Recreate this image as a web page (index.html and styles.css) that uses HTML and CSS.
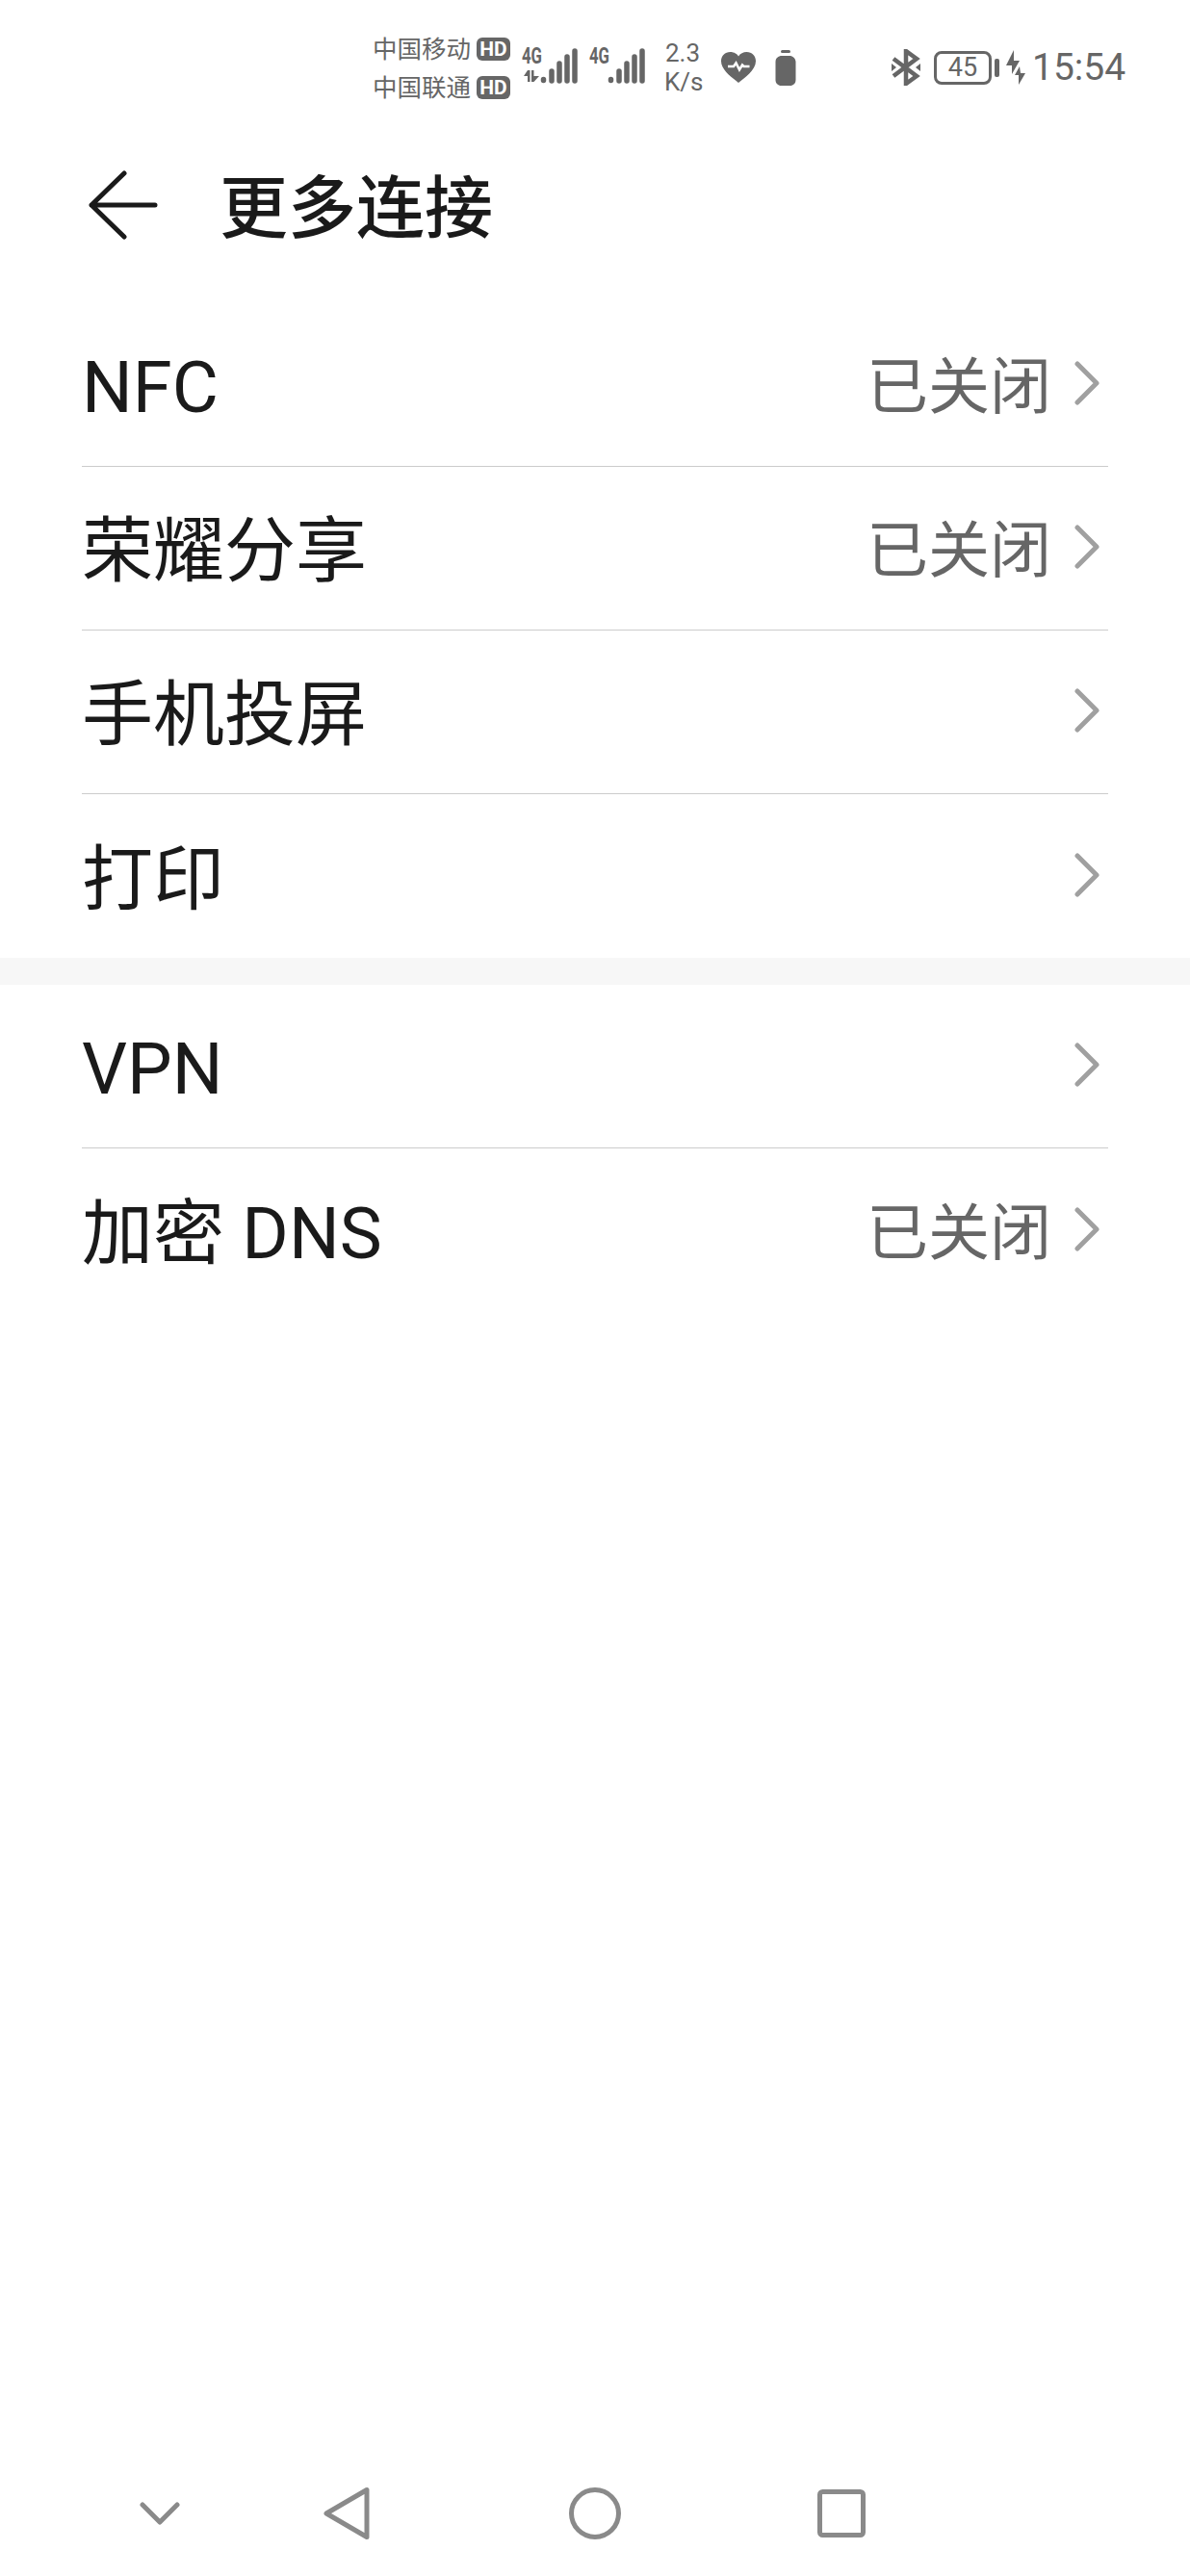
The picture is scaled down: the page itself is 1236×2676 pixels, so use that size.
FILE: index.html
```html
<!DOCTYPE html>
<html lang="zh-CN">
<head>
    <meta charset="UTF-8">
    <meta name="viewport" content="width=device-width, initial-scale=1.0">
    <title>更多连接</title>
    <link rel="stylesheet" href="styles.css">
</head>
<body>
    <div class="page">
        <div class="status-bar">
            <div class="carriers">
                <div class="carrier"><span>中国移动</span><span class="hd">HD</span></div>
                <div class="carrier"><span>中国联通</span><span class="hd">HD</span></div>
            </div>
            <svg class="signal" width="58" height="46" viewBox="0 -8 58 46">
                <text class="net" x="0" y="16" textLength="21" lengthAdjust="spacingAndGlyphs">4G</text>
                <path class="arrows" d="M6 23h2.500v12H6v-6H2zM10 23h2.500v6H18l-5.500 6H10z"/>
                <path class="bars" d="M22.500 32.500v1M31 24v10M39 16v18M47 9v25M55 3v31"/>
            </svg>
            <svg class="signal" width="58" height="46" viewBox="0 -8 58 46">
                <text class="net" x="0" y="16" textLength="21" lengthAdjust="spacingAndGlyphs">4G</text>
                <path class="bars" d="M22.500 32.500v1M31 24v10M39 16v18M47 9v25M55 3v31"/>
            </svg>
            <div class="speed"><span>2.3</span><span>K/s</span></div>
            <svg class="heart" width="36" height="32" viewBox="0 0 36 32">
                <path d="M18 32C12 27 0 19 0 9.500 0 4 4 0 9.500 0c3.500 0 6.700 1.600 8.500 4.500C19.800 1.600 23 0 26.500 0 32 0 36 4 36 9.500 36 19 24 27 18 32z"/>
                <path class="pulse" d="M7 15h6l2.500-3.500 3.500 7 3-5 1.500 1.500h6"/>
            </svg>
            <svg class="pill" width="22" height="37" viewBox="0 0 22 37">
                <rect x="6" y="0" width="10" height="3" rx="1.500"/>
                <path d="M7 6h8c3.500 0 6 2.500 6.500 6v19c0 3.500-2.500 6-6 6h-9c-3.500 0-6-2.500-6-6V12C.5 8.500 3.500 6 7 6z"/>
            </svg>
            <svg class="bluetooth" width="30" height="38" viewBox="0 0 30 38">
                <path class="bt-line" d="M2 10l24 18-11 8V2l11 8L2 28"/>
                <path d="M0 15l5 4-5 4zM30 15l-5 4 5 4z"/>
            </svg>
            <div class="battery"><span class="battery-level">45</span></div>
            <div class="battery-nub"></div>
            <svg class="bolt" width="20" height="36" viewBox="0 0 20 36">
                <path d="M8 0L0 16h6v9l8-14H8zM14 17l-5 9h4v10l7-12h-5z"/>
            </svg>
            <div class="clock">15:54</div>
        </div>

        <div class="toolbar">
            <svg class="back" width="72" height="72" viewBox="0 0 72 72">
                <path d="M37 3L3 36l34 33M3 36h66"/>
            </svg>
            <h1 class="title">更多连接</h1>
        </div>

        <div class="list list-first">
            <div class="row">
                <span class="label">NFC</span>
                <span class="value">已关闭</span>
                <svg class="chevron" width="26" height="46" viewBox="0 0 26 46"><path d="M3 3l20 20L3 43"/></svg>
            </div>
            <div class="row">
                <span class="label">荣耀分享</span>
                <span class="value">已关闭</span>
                <svg class="chevron" width="26" height="46" viewBox="0 0 26 46"><path d="M3 3l20 20L3 43"/></svg>
            </div>
            <div class="row">
                <span class="label">手机投屏</span>
                <svg class="chevron" width="26" height="46" viewBox="0 0 26 46"><path d="M3 3l20 20L3 43"/></svg>
            </div>
            <div class="row">
                <span class="label">打印</span>
                <svg class="chevron" width="26" height="46" viewBox="0 0 26 46"><path d="M3 3l20 20L3 43"/></svg>
            </div>
        </div>

        <div class="band"></div>

        <div class="list">
            <div class="row">
                <span class="label">VPN</span>
                <svg class="chevron" width="26" height="46" viewBox="0 0 26 46"><path d="M3 3l20 20L3 43"/></svg>
            </div>
            <div class="row">
                <span class="label">加密 DNS</span>
                <span class="value">已关闭</span>
                <svg class="chevron" width="26" height="46" viewBox="0 0 26 46"><path d="M3 3l20 20L3 43"/></svg>
            </div>
        </div>

        <div class="nav-bar">
            <svg class="nav-down" width="42" height="24" viewBox="0 0 42 24"><path d="M3 3l18 18L39 3"/></svg>
            <svg class="nav-back" width="48" height="56" viewBox="0 0 48 56"><path d="M45 3.500v49L3 28z"/></svg>
            <svg class="nav-home" width="54" height="54" viewBox="0 0 54 54"><circle cx="27" cy="27" r="24.500"/></svg>
            <svg class="nav-recent" width="50" height="50" viewBox="0 0 50 50"><rect x="2.500" y="2.500" width="45" height="45" rx="3"/></svg>
        </div>
    </div>
</body>
</html>
```

FILE: styles.css
```css
body {
    margin: 0;
    background-color: #fff;
    font-family: Roboto, "Noto Sans CJK SC", sans-serif;
    color: #1a1a1a;
}
svg {
    display: block;
    flex: none;
}
.page {
    display: flex;
    flex-direction: column;
    height: 2676px;
    overflow: hidden;
}

/* status bar */
.status-bar {
    display: flex;
    align-items: center;
    height: 140px;
    padding-left: 387px;
    box-sizing: border-box;
    color: #666;
}
.carriers {
    display: flex;
    flex-direction: column;
    gap: 8px;
    width: 143px;
    margin-top: 1px;
}
.carrier {
    display: flex;
    align-items: center;
    justify-content: space-between;
    height: 32px;
    font-size: 25.500px;
    line-height: 32px;
}
.hd {
    width: 35px;
    height: 24px;
    border-radius: 6px;
    background-color: #666;
    color: #fff;
    font-size: 21px;
    font-weight: 700;
    line-height: 24px;
    text-align: center;
}
.signal {
    margin-left: 12px;
    margin-top: -10px;
}
.net {
    fill: #666;
    font-family: Roboto, sans-serif;
    font-size: 24px;
    font-weight: 700;
}
.arrows {
    fill: #666;
}
.bars {
    fill: none;
    stroke: #666;
    stroke-width: 5.500;
    stroke-linecap: round;
}
.speed {
    display: flex;
    flex-direction: column;
    align-items: flex-start;
    margin-left: 20px;
    width: 59px;
    font-size: 26px;
    line-height: 30px;
}
.speed span:first-child {
    margin-left: 1px;
}
.heart {
    fill: #666;
}
.pulse {
    fill: none;
    stroke: #fff;
    stroke-width: 2.500;
}
.pill {
    fill: #666;
    margin-left: 20px;
}
.bluetooth {
    margin-left: 99px;
    fill: #666;
}
.bt-line {
    fill: none;
    stroke: #666;
    stroke-width: 4.500;
}
.battery {
    display: flex;
    align-items: center;
    justify-content: center;
    box-sizing: border-box;
    width: 60px;
    height: 35px;
    margin-left: 14px;
    border: 3px solid #666;
    border-radius: 8px;
}
.battery-level {
    font-size: 27px;
    line-height: 29px;
}
.battery-nub {
    width: 5px;
    height: 19px;
    margin-left: 3px;
    border-radius: 2px;
    background-color: #666;
}
.bolt {
    fill: #666;
    margin-left: 7px;
}
.clock {
    margin-left: 7px;
    font-size: 39px;
    line-height: 46px;
}

/* title */
.toolbar {
    display: flex;
    align-items: center;
    height: 146px;
    padding-left: 92px;
}
.back {
    fill: none;
    stroke: #1a1a1a;
    stroke-width: 5;
    stroke-linecap: round;
    stroke-linejoin: round;
}
.title {
    margin: 8px 0 0 64px;
    font-size: 71px;
    font-weight: 500;
    line-height: 90px;
}

/* rows */
.list {
    padding: 0 85px;
}
.list-first {
    margin-top: 29px;
}
.row {
    display: flex;
    align-items: center;
    box-sizing: border-box;
    height: 170px;
    border-bottom: 1.500px solid #ccc;
}
.row:last-child {
    border-bottom: none;
}
.label {
    flex: 1;
    padding-top: 7px;
    font-size: 74px;
    line-height: 90px;
}
.value {
    margin-right: 24px;
    padding-top: 7px;
    color: #666;
    font-size: 64px;
    line-height: 80px;
}
.chevron {
    margin: 0 9px 3px 0;
    fill: none;
    stroke: #a0a0a0;
    stroke-width: 5;
    stroke-linecap: round;
    stroke-linejoin: round;
}
.band {
    height: 28px;
    background-color: #f7f7f7;
}

/* navigation bar */
.nav-bar {
    display: flex;
    align-items: center;
    margin-top: auto;
    height: 130px;
    padding-left: 145px;
    box-sizing: border-box;
}
.nav-bar svg {
    fill: none;
    stroke: #8a8a8a;
    stroke-width: 5;
    stroke-linecap: round;
    stroke-linejoin: round;
}
.nav-back {
    margin-left: 149px;
}
.nav-home {
    margin-left: 207px;
}
.nav-recent {
    margin-left: 204px;
}
```
